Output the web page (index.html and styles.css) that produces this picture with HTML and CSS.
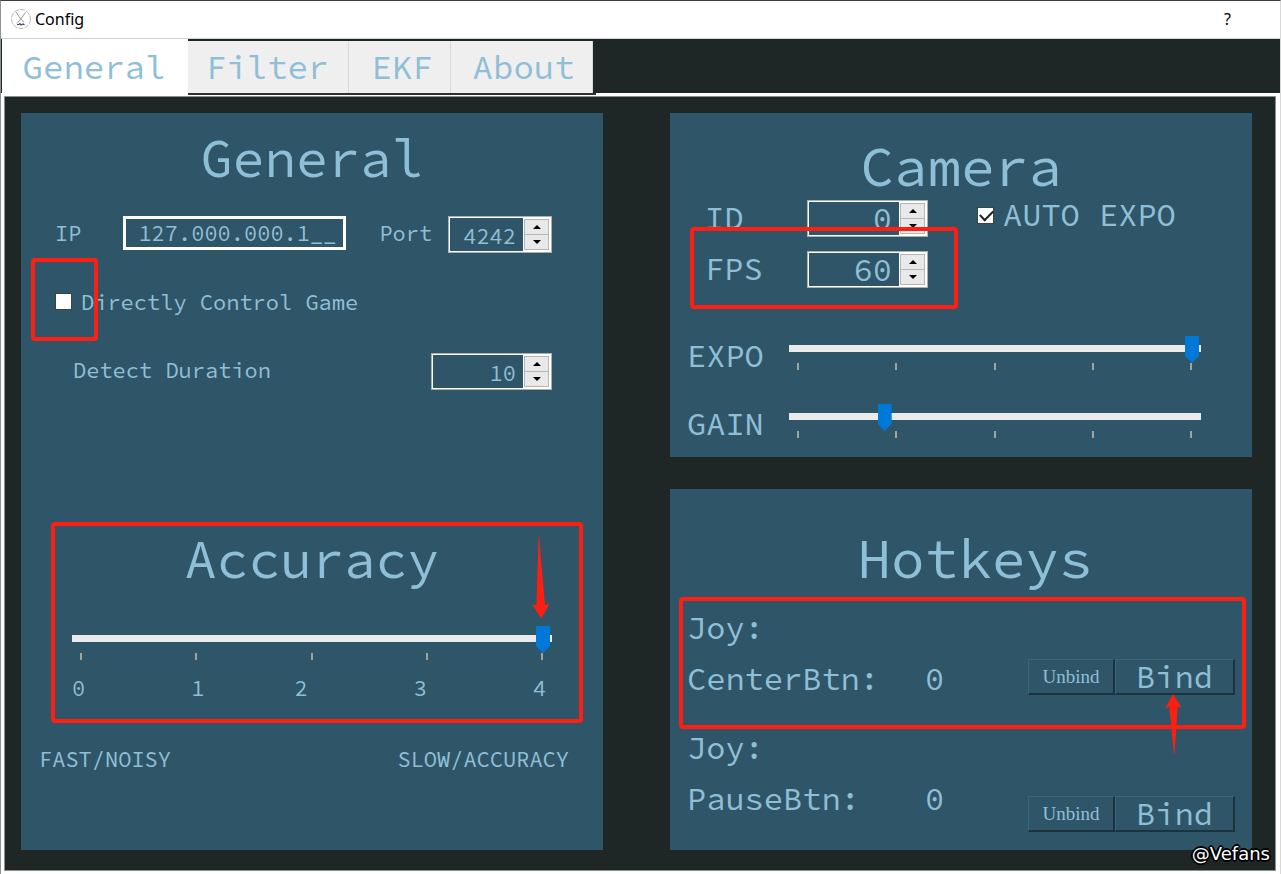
FILE: index.html
```html
<!DOCTYPE html>
<html lang="en">
<head>
<meta charset="utf-8">
<title>Config</title>
<link rel="stylesheet" href="styles.css">
</head>
<body>
<div class="window">
  <header class="titlebar">
    <svg class="app-icon" viewBox="0 0 22 22" aria-hidden="true">
      <circle cx="11" cy="11" r="9.5" fill="none" stroke="#b4b4b4" stroke-width="1" stroke-dasharray="5 1.2"/>
      <path d="M6 4l4 6M15.500 4.500l-4 5.500M10 9.500l4 5M11.500 10L7 15.500" fill="none" stroke="#999" stroke-width="1"/>
      <path d="M7 16.500h2l1-1 1 1.500 2-1 1.500 1" fill="none" stroke="#3c4560" stroke-width="1.100"/>
    </svg>
    <h1 class="title">Config</h1>
    <button class="help" type="button" aria-label="Help">?</button>
  </header>

  <nav class="tabs" role="tablist">
    <button class="tab tab-active" type="button" role="tab" aria-selected="true">General</button>
    <div class="tab-rest">
      <button class="tab" type="button" role="tab">Filter</button>
      <button class="tab" type="button" role="tab">EKF</button>
      <button class="tab" type="button" role="tab">About</button>
    </div>
  </nav>

  <main class="pane">
    <section class="card general">
      <h2>General</h2>
      <div class="row row-net">
        <label for="ip">IP</label>
        <input id="ip" class="ip" type="text" value="127.000.000.1__">
        <label for="port">Port</label>
        <div class="spin spin-port">
          <input id="port" type="text" inputmode="numeric" value="4242">
          <div class="spin-buttons">
            <button type="button" aria-label="Increase port"><i class="up"></i></button>
            <button type="button" aria-label="Decrease port"><i class="down"></i></button>
          </div>
        </div>
      </div>
      <div class="row row-direct">
        <input id="direct" class="check" type="checkbox">
        <label for="direct">Directly Control Game</label>
      </div>
      <div class="row row-detect">
        <label for="detect">Detect Duration</label>
        <div class="spin">
          <input id="detect" type="text" inputmode="numeric" value="10">
          <div class="spin-buttons">
            <button type="button" aria-label="Increase duration"><i class="up"></i></button>
            <button type="button" aria-label="Decrease duration"><i class="down"></i></button>
          </div>
        </div>
      </div>
      <h2 class="accuracy-title">Accuracy</h2>
      <div class="slider slider-accuracy">
        <input type="range" min="0" max="4" value="4" aria-label="Accuracy">
        <div class="ticks"><i></i><i></i><i></i><i></i><i></i></div>
        <div class="scale"><span>0</span><span>1</span><span>2</span><span>3</span><span>4</span></div>
      </div>
      <div class="ends"><span>FAST/NOISY</span><span>SLOW/ACCURACY</span></div>
      <div class="mark mark-direct"></div>
      <div class="mark mark-accuracy">
        <svg class="arrow arrow-down" viewBox="0 0 18 82" aria-hidden="true"><path d="M6.500 0h.6L13 68l4.500-1.500L9.500 81.500 0 67.500 4.500 68z" fill="#ff1e12"/></svg>
      </div>
    </section>

    <div class="column">
      <section class="card camera">
        <h2>Camera</h2>
        <div class="camera-grid">
          <label for="cam-id">ID</label>
          <div class="spin">
            <input id="cam-id" type="text" inputmode="numeric" value="0">
            <div class="spin-buttons">
              <button type="button" aria-label="Increase ID"><i class="up"></i></button>
              <button type="button" aria-label="Decrease ID"><i class="down"></i></button>
            </div>
          </div>
          <div class="auto">
            <input id="auto" class="check" type="checkbox" checked>
            <label for="auto">AUTO EXPO</label>
          </div>
          <label for="fps">FPS</label>
          <div class="spin">
            <input id="fps" type="text" inputmode="numeric" value="60">
            <div class="spin-buttons">
              <button type="button" aria-label="Increase FPS"><i class="up"></i></button>
              <button type="button" aria-label="Decrease FPS"><i class="down"></i></button>
            </div>
          </div>
        </div>
        <div class="slider-row">
          <label for="expo">EXPO</label>
          <div class="slider">
            <input id="expo" type="range" min="0" max="100" value="100">
            <div class="ticks"><i></i><i></i><i></i><i></i><i></i></div>
          </div>
        </div>
        <div class="slider-row">
          <label for="gain">GAIN</label>
          <div class="slider">
            <input id="gain" type="range" min="0" max="100" value="22">
            <div class="ticks"><i></i><i></i><i></i><i></i><i></i></div>
          </div>
        </div>
        <div class="mark mark-fps"></div>
      </section>

      <section class="card hotkeys">
        <h2>Hotkeys</h2>
        <div class="binding">
          <div class="joy">Joy:</div>
          <div class="name">CenterBtn:</div>
          <div class="value">0</div>
          <div class="buttons">
            <button class="unbind" type="button">Unbind</button><button class="bind" type="button">Bind</button>
          </div>
        </div>
        <div class="binding binding-low">
          <div class="joy">Joy:</div>
          <div class="name">PauseBtn:</div>
          <div class="value">0</div>
          <div class="buttons">
            <button class="unbind" type="button">Unbind</button><button class="bind" type="button">Bind</button>
          </div>
        </div>
        <div class="mark mark-hotkey">
          <svg class="arrow arrow-up" viewBox="0 0 17 61" aria-hidden="true"><path d="M8 0l8.500 13.500L12.700 12.500 9.500 60h-.6L4.300 12.500 0 14.500z" fill="#ff1e12"/></svg>
        </div>
      </section>
    </div>
    <div class="watermark">@Vefans</div>
  </main>
</div>
</body>
</html>
```
FILE: styles.css
```css
:root {
  --mono: "Source Code Pro", "Liberation Mono", monospace;
  --ink: #8fbfd6;
  --card: #2f5668;
  --dark: #1f2626;
  --red: #ff1e12;
}

* { box-sizing: border-box; }

body {
  margin: 0;
  background: #fff;
  color: var(--ink);
  font-family: var(--mono);
  font-size: 22px;
}

button, input { font: inherit; color: inherit; }

.window {
  display: flex;
  flex-direction: column;
  min-height: 100vh;
  border-top: 1px solid #3a3f40;
  border-left: 1px solid #8d9293;
  border-right: 1px solid #d8d8d8;
}

/* Title bar */
.titlebar {
  display: flex;
  align-items: center;
  height: 37px;
  padding: 0 49px 2px 9px;
  color: #000;
  font-family: "Noto Sans", sans-serif;
  font-size: 16px;
}
.app-icon { width: 22px; height: 22px; }
.title { flex: 1; margin: 0 0 0 3px; font-size: 16px; font-weight: 400; }
.help { padding: 0; border: 0; background: none; font-size: 16px; }

/* Tabs */
.tabs {
  display: flex;
  align-items: flex-start;
  height: 58px;
  padding-left: 1px;
  background: linear-gradient(var(--dark) 54px, #fff 54px);
  border-top: 1px solid #d0d3d3;
}
.tab {
  height: 52px;
  padding: 0 17px 0 22px;
  border: 0;
  border-right: 1px solid #d9d9d9;
  background: #efefef;
  font-size: 34px;
  line-height: 52px;
}
.tab-active {
  height: 58px;
  width: 186px;
  padding: 0 22px 2px 20px;
  border: 0;
  background: #fff;
}
.tab-rest {
  display: flex;
  padding: 2px 3px 0 0;
  border-bottom: 2px solid #2b3133;
  background: linear-gradient(to left, var(--dark) 3px, transparent 3px);
}
.tab-rest .tab:first-child { padding: 0 20px 0 18px; }

/* Pane */
.pane {
  position: relative;
  flex: 1;
  display: grid;
  grid-template-columns: 1fr 1fr;
  gap: 67px;
  margin: 0 4px 3px 3px;
  padding: 16px 23px 20px 16px;
  border: 1px solid #8b8f8f;
  background: var(--dark);
}
.column { display: flex; flex-direction: column; gap: 32px; }
.card { position: relative; background: var(--card); }
.card h2 {
  margin: 0;
  font-size: 53px;
  font-weight: 400;
  line-height: 60px;
  text-align: center;
}

/* Form controls */
.check {
  appearance: none;
  position: relative;
  flex: none;
  width: 17px;
  height: 17px;
  margin: 0;
  border: 1px solid #3c4448;
  background: #fff;
}
.check:checked::after {
  content: "";
  position: absolute;
  left: 2px;
  top: 2px;
  width: 11px;
  height: 6px;
  border: solid #222;
  border-width: 0 0 2px 2px;
  transform: rotate(-45deg);
}

.spin {
  display: flex;
  width: 121px;
  height: 37px;
  border: 1px solid #a9b0b3;
  background: #fff;
  padding: 1px;
}
.spin-port { width: 104px; }
.spin input {
  flex: 1;
  min-width: 0;
  padding: 2px 7px 0 0;
  border: 0;
  border-radius: 0;
  background: var(--card);
  text-align: right;
}
.spin-buttons {
  display: flex;
  flex-direction: column;
  width: 27px;
  padding: 1px;
}
.spin-buttons button {
  flex: 1;
  display: flex;
  align-items: center;
  justify-content: center;
  padding: 0;
  border: 1px solid #b4b4b4;
  background: #e9e9e9;
}
.spin-buttons button + button { border-top: 0; }
.up, .down { border: solid transparent; border-width: 0 4px; }
.up { border-bottom: 4px solid #000; }
.down { border-top: 4px solid #000; }

.slider input {
  appearance: none;
  display: block;
  width: 100%;
  height: 27px;
  margin: 0;
  padding: 0 2px;
  background: linear-gradient(#e8eaeb, #e8eaeb) no-repeat 0 9px / 100% 7px;
}
.slider input::-webkit-slider-thumb {
  appearance: none;
  width: 14px;
  height: 27px;
  background: #0078d7;
  clip-path: polygon(0 0, 100% 0, 100% 74%, 50% 100%, 0 74%);
}
.ticks { display: flex; justify-content: space-between; padding: 0 9px 0 8px; }
.ticks i { width: 2px; height: 7px; background: #a5a296; }

/* General */
.general { padding-top: 15px; }
.row { display: flex; align-items: flex-start; height: 37px; padding: 0 51px 0 34px; line-height: 34px; }
.row-net { margin-top: 28px; }
.ip {
  width: 223px;
  height: 34px;
  margin: 0 33px 0 42px;
  padding: 0 5px 0 12px;
  border: 3px solid #fff;
  border-radius: 0;
  background: var(--card);
}
.row-net .spin { margin-left: auto; }
.row-direct { align-items: center; gap: 9px; margin-top: 30px; }
.row-detect { justify-content: space-between; margin-top: 33px; padding-left: 52px; }
.card .accuracy-title { margin-top: 139px; }
.slider-accuracy { margin: 37px 51px 0; }
.scale {
  display: grid;
  grid-template-columns: 119fr 103fr 119fr 119fr 19fr;
  margin-top: 14px;
  line-height: 28px;
}
.ends {
  display: flex;
  justify-content: space-between;
  margin-top: 43px;
  padding: 0 34px 0 18px;
  line-height: 28px;
}

/* Camera */
.camera { padding: 23px 0 13px; }
.camera, .hotkeys { font-size: 32px; }
.camera h2, .hotkeys h2 { font-size: 56px; }
.camera-grid {
  display: grid;
  grid-template-columns: 102px 121px 1fr;
  row-gap: 14px;
  align-items: center;
  margin-top: 4px;
  padding-left: 35px;
  line-height: 37px;
}
.auto { display: flex; align-items: center; gap: 9px; height: 30px; margin-left: 49px; align-self: start; }
.slider-row { display: flex; padding: 0 51px 0 17px; }
.slider-row label { width: 102px; line-height: 40px; }
.slider-row .slider { flex: 1; }
.camera-grid + .slider-row { margin-top: 48px; }
.slider-row + .slider-row { margin-top: 28px; }

/* Hotkeys */
.hotkeys { flex: 1; padding: 39px 0 0; }
.hotkeys h2 { padding-left: 28px; }
.binding {
  display: grid;
  grid-template: 44px 58px / 238px 1fr auto;
  padding: 0 17px;
  margin-bottom: 18px;
}
.hotkeys h2 + .binding { margin-top: 18px; }
.joy { grid-column: 1 / -1; line-height: 44px; }
.name, .value { line-height: 58px; }
.buttons { display: flex; align-self: start; height: 36px; margin-top: 9px; }
.binding-low .buttons { margin-top: 26px; }
.buttons button {
  padding: 0;
  border: 1px solid #38677b;
  border-right: 2px solid #1c323d;
  border-bottom: 2px solid #1c323d;
  background: var(--card);
}
.buttons .unbind { width: 87px; font-family: "Liberation Serif", serif; font-size: 19px; }
.bind { width: 120px; line-height: 34px; }

/* Highlight frames and arrows */
.mark {
  position: absolute;
  border: 4px solid var(--red);
  border-radius: 4px;
  pointer-events: none;
}
.mark-direct { left: 10px; top: 145px; width: 67px; height: 83px; }
.mark-accuracy { left: 30px; right: 20px; top: 409px; height: 201px; }
.mark-fps { left: 20px; top: 114px; width: 268px; height: 82px; }
.mark-hotkey { left: 9px; right: 6px; top: 108px; height: 132px; }
.arrow { position: absolute; }
.arrow-down { width: 18px; height: 82px; right: 29px; top: 11px; }
.arrow-up { width: 17px; height: 61px; right: 60px; top: 93px; }

.watermark {
  position: absolute;
  right: 5px;
  bottom: 4px;
  color: #fff;
  font-family: "DejaVu Sans", sans-serif;
  font-size: 18px;
  line-height: 24px;
  text-shadow: 2px 0 #000, -2px 0 #000, 0 2px #000, 0 -2px #000, 1px 1px #000, -1px -1px #000, 1px -1px #000, -1px 1px #000;
}
```
